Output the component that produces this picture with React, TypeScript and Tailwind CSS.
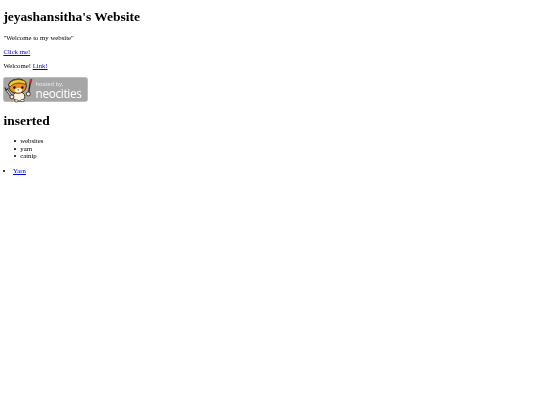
function Banner() {
  return (
    <div className="relative inline-block align-baseline w-[200px] h-[60px] rounded-[6px] bg-[#a6a6a6] border border-[#bdbdbd]">
      <svg viewBox="0 0 34 25" className="absolute left-0 top-0 w-[80px] h-[59px]">
        <path d="M2.5 11.5 L8 19" stroke="#2e2e2e" strokeWidth="2.4" />
        <path d="M2.5 11.5 L8 19" stroke="#d8d8d8" strokeWidth="1.1" />
        <path d="M1 9.5 L2 12 L4.5 10.5" stroke="#2e2e2e" strokeWidth="1.1" fill="none" />
        <path d="M26.5 4 L24.5 17" stroke="#3f2010" strokeWidth="1.5" />
        <path d="M26.5 5 L27.5 1" stroke="#c22f22" strokeWidth="2.4" />
        <ellipse cx="15" cy="18.5" rx="6" ry="4.8" fill="#f6f2e6" stroke="#2e2010" strokeWidth="0.9" />
        <path d="M5 8 C4 3 10 1 15 1 C20 1 24 5 22 10 C21 14 16 16 12 15 C8 15 5 12 5 8 Z" fill="#ec8f1e" stroke="#2e2010" strokeWidth="0.9" />
        <path d="M4.5 7 C7 1.5 16 -0.5 22 4 L21.5 6.5 C16 4 10 4.5 6 9 Z" fill="#f7cb2e" stroke="#2e2010" strokeWidth="0.7" />
        <ellipse cx="14.5" cy="12.3" rx="3.6" ry="2.3" fill="#fbf3dc" />
        <circle cx="10.5" cy="9.5" r="1.2" fill="#141414" />
        <circle cx="18.5" cy="9.5" r="1.2" fill="#141414" />
        <path d="M13.5 11.5 L15.5 11.5 L14.5 12.8 Z" fill="#7a2a1a" />
        <circle cx="8" cy="19" r="2" fill="#f6f2e6" stroke="#2e2010" strokeWidth="0.8" />
        <circle cx="24.5" cy="16" r="2" fill="#f6f2e6" stroke="#2e2010" strokeWidth="0.8" />
        <ellipse cx="12.5" cy="23" rx="2" ry="1.1" fill="#f6f2e6" stroke="#2e2010" strokeWidth="0.6" />
        <ellipse cx="18.5" cy="22.8" rx="2" ry="1.1" fill="#f6f2e6" stroke="#2e2010" strokeWidth="0.6" />
      </svg>
      <div className="absolute left-[74px] top-[10px] text-[14px] leading-[13px] tracking-[-0.2px] text-[#ececec] font-['Open_Sans',sans-serif]">hosted by,</div>
      <div className="absolute left-[74px] top-[24px] text-[28px] leading-[26px] text-white font-['Open_Sans',sans-serif] tracking-[-0.8px]">neocities</div>
    </div>
  );
}

export default function App() {
  return (
    <div className="flow-root w-[1280px] min-h-[960px] bg-white text-black px-2 text-[16px] leading-[18px] font-['Liberation_Serif',serif] [zoom:0.421875] [filter:blur(0.7px)]">
      <h1 className="text-[32px] leading-[37px] font-bold my-[21.44px]">jeyashansitha's Website</h1>
      <p className="my-4">"Welcome to my website"</p>
      <p className="my-4"><a className="text-[#0000ee] underline" href="#">Click me!</a></p>
      <p className="my-4">Welcome! <a className="text-[#0000ee] underline" href="#">Link!</a></p>
      <p className="my-4"><Banner /></p>
      <h1 className="text-[32px] leading-[37px] font-bold my-[21.44px]">inserted</h1>
      <ul className="pl-10 my-4">
        <li className="flex items-center gap-[11px] -ml-4"><span className="size-[5px] rounded-full bg-black" />websites</li>
        <li className="flex items-center gap-[11px] -ml-4"><span className="size-[5px] rounded-full bg-black" />yarn</li>
        <li className="flex items-center gap-[11px] -ml-4"><span className="size-[5px] rounded-full bg-black" />catnip</li>
      </ul>
      <ul>
        <li className="flex items-center gap-[18px]"><span className="size-[5px] rounded-full bg-black" /><a className="text-[#0000ee] underline" href="#">Yarn</a></li>
      </ul>
    </div>
  );
}
